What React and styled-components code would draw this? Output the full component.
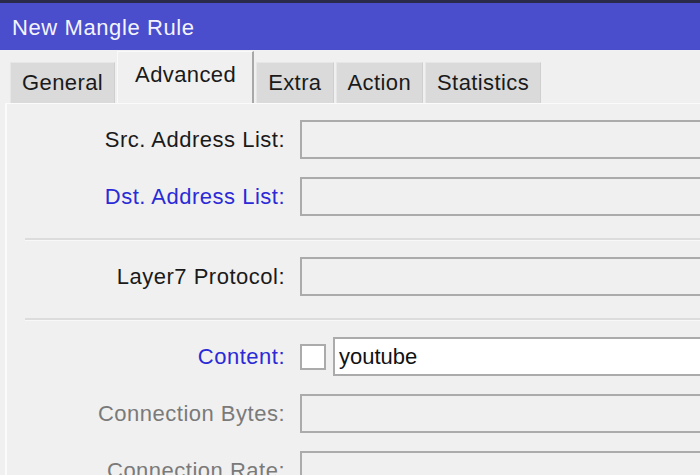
import React from 'react'
import styled, { createGlobalStyle } from 'styled-components'

const GlobalStyle = createGlobalStyle`
  html, body {
    margin: 0;
    padding: 0;
    background: #f0f0f0;
  }
  body {
    font-family: "Liberation Sans", Arial, sans-serif;
  }
`

const Window = styled.div`
  width: 700px;
  height: 475px;
  overflow: hidden;
  background: #f0f0f0;
  display: flex;
  flex-direction: column;
`

const TitleBar = styled.div`
  flex: none;
  box-sizing: border-box;
  height: 50px;
  border-top: 3px solid #2a2a4a;
  background: #4a4dcc;
  color: #f4f4ff;
  font-size: 22px;
  letter-spacing: 0.6px;
  display: flex;
  align-items: center;
  padding: 2px 0 0 12px;
`

const TabBar = styled.div`
  flex: none;
  height: 53px;
  display: flex;
  align-items: flex-end;
  padding-left: 10px;
  gap: 2px;
  background: #f0f0f0;
`

const Tab = styled.div`
  box-sizing: border-box;
  height: ${p => (p.$active ? '52px' : '41px')};
  padding: ${p => (p.$active ? '0 16px 5px 17px' : '0 11px')};
  display: flex;
  align-items: center;
  background: ${p => (p.$active ? '#f0f0f0' : '#dadada')};
  border: 1px solid ${p => (p.$active ? '#fafafa' : '#e6e6e6')};
  border-right: ${p => (p.$active ? '2px solid #a8a8a8' : '1px solid #cfcfcf')};
  border-bottom: none;
  color: #1a1a1a;
  font-size: 22px;
  letter-spacing: 0.4px;
`

const Panel = styled.div`
  flex: 1;
  margin-left: 5px;
  border-left: 2px solid #fbfbfb;
  border-top: 1px solid #fbfbfb;
  padding-top: 16px;
  display: flex;
  flex-direction: column;
  gap: 18px;
`

const Row = styled.div`
  flex: none;
  display: grid;
  grid-template-columns: 278px 1fr;
  column-gap: 15px;
  align-items: center;
  height: 39px;
`

const Label = styled.span`
  text-align: right;
  font-size: 22px;
  letter-spacing: 0.5px;
  white-space: nowrap;
  color: ${p => p.$tone === 'blue' ? '#2a2ad6' : p.$tone === 'gray' ? '#7a7a7a' : '#1a1a1a'};
`

const Field = styled.div`
  height: 39px;
  box-sizing: border-box;
  border: 2px solid #ababab;
  border-right: none;
  background: ${p => (p.$filled ? '#ffffff' : '#f0f0f0')};
  display: flex;
  align-items: center;
  padding-left: 4px;
  font-size: 22px;
  color: #111;
`

const Combo = styled.div`
  display: flex;
  align-items: center;
  gap: 7px;
`

const Check = styled.div`
  width: 26px;
  height: 26px;
  flex: none;
  box-sizing: border-box;
  border: 2px solid #ababab;
  background: #ffffff;
`

const Separator = styled.div`
  flex: none;
  height: 2px;
  margin: 4px 0 -2px 18px;
  background: #dcdcdc;
  border-bottom: 1px solid #f8f8f8;
`

const Wide = styled(Field)`
  flex: 1;
`

export default function App() {
  const tabs = ['General', 'Advanced', 'Extra', 'Action', 'Statistics']

  return (
    <>
      <GlobalStyle />
      <Window>
        <TitleBar>New Mangle Rule</TitleBar>
        <TabBar>
          {tabs.map(t => (
            <Tab key={t} $active={t === 'Advanced'}>{t}</Tab>
          ))}
        </TabBar>
        <Panel>
          <Row>
            <Label>Src. Address List:</Label>
            <Field />
          </Row>
          <Row>
            <Label $tone='blue'>Dst. Address List:</Label>
            <Field />
          </Row>
          <Separator />
          <Row>
            <Label>Layer7 Protocol:</Label>
            <Field />
          </Row>
          <Separator />
          <Row>
            <Label $tone='blue'>Content:</Label>
            <Combo>
              <Check />
              <Wide $filled>youtube</Wide>
            </Combo>
          </Row>
          <Row>
            <Label $tone='gray'>Connection Bytes:</Label>
            <Field />
          </Row>
          <Row>
            <Label $tone='gray'>Connection Rate:</Label>
            <Field />
          </Row>
        </Panel>
      </Window>
    </>
  )
}
